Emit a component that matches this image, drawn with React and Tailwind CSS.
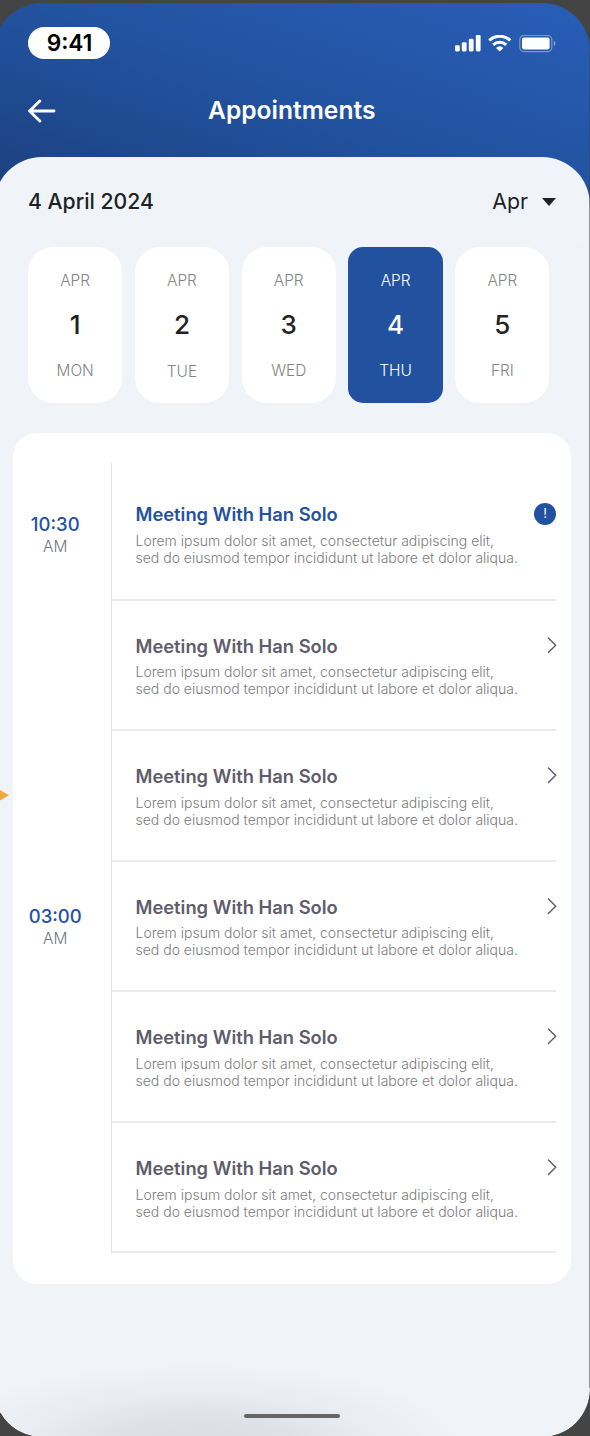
import React from "react";

const days = [
  { n: 1, d: "MON", nudge: "" },
  { n: 2, d: "TUE", nudge: "pt-px" },
  { n: 3, d: "WED", nudge: "" },
  { n: 4, d: "THU", nudge: "", active: true },
  { n: 5, d: "FRI", nudge: "" },
];

const meetings = [
  { box: "h-[138px] pt-[40px]", gap: "mt-[7px]", active: true },
  { box: "h-[130px] pt-[34px]", gap: "mt-[6px]" },
  { box: "h-[131px] pt-[34px]", gap: "mt-[7px]" },
  { box: "h-[130px] pt-[34px]", gap: "mt-[6px]" },
  { box: "h-[131px] pt-[34px]", gap: "mt-[7px]" },
  { box: "h-[130px] pt-[34px]", gap: "mt-[7px]" },
];

function StatusIcons() {
  return (
    <svg className="mt-[2px] mr-[1px]" width="102" height="18" viewBox="0 0 102 18" fill="none">
      <g fill="#fff">
        <rect x="0" y="10.2" width="4.8" height="6.2" rx="1.3" />
        <rect x="6.8" y="7.3" width="4.8" height="9.1" rx="1.3" />
        <rect x="13.8" y="3.8" width="4.8" height="12.6" rx="1.3" />
        <rect x="20.8" y="0" width="4.8" height="16.4" rx="1.3" />
      </g>
      <g stroke="#fff" strokeWidth="3">
        <path d="M34.2 5.4a15.2 15.2 0 0 1 21 0" />
        <path d="M38.2 9.9a9.5 9.5 0 0 1 13 0" />
      </g>
      <path d="M41 13a5.6 5.6 0 0 1 7.4 0L44.7 16.6z" fill="#fff" />
      <rect x="64.8" y="0.4" width="32" height="16.2" rx="4" stroke="#fff" strokeOpacity=".38" strokeWidth="1.2" />
      <rect x="67" y="2.6" width="27.6" height="11.8" rx="1.8" fill="#fff" />
      <path d="M98.8 5.7v5.6c1.9-.8 1.9-4.8 0-5.6z" fill="#fff" fillOpacity=".45" />
    </svg>
  );
}

function Time({ value }) {
  return (
    <div className="flex flex-col items-center whitespace-nowrap">
      <div className="-mt-px mb-px text-[18.5px] leading-[22px] font-medium text-[#2251a0]">{value}</div>
      <div className="text-[15.5px] leading-[22px] font-light text-[#747480]">AM</div>
    </div>
  );
}

function Meeting({ item }) {
  return (
    <div className={"flex justify-between border-b-2 border-[#ebebec] pl-[24px] whitespace-nowrap " + item.box}>
      <div>
        <div className={"text-[18.35px] leading-[22px] font-semibold " + (item.active ? "text-[#2251a0]" : "text-[#5e5c6b]")}>
          Meeting With Han Solo
        </div>
        <div className={"text-[14px] leading-[17px] font-light text-[#7c7c7c] " + item.gap}>
          Lorem ipsum dolor sit amet, consectetur adipiscing elit,
          <br />
          sed do eiusmod tempor incididunt ut labore et dolor aliqua.
        </div>
      </div>
      {item.active ? (
        <div className="flex size-[22px] items-center justify-center rounded-full bg-[#2251a0] text-[13px] font-normal text-white">!</div>
      ) : (
        <svg className="mt-[2px] -mr-px" width="10" height="17" viewBox="0 0 10 17" fill="none">
          <path d="M1.4 1L8.7 8.3L1.4 15.6" stroke="#5e5c6b" strokeWidth="1.4" strokeLinecap="round" strokeLinejoin="round" />
        </svg>
      )}
    </div>
  );
}

export default function App() {
  return (
    <div className="relative h-[1436px] w-[590px] overflow-hidden bg-[#444444] pt-[3px] font-['Inter',sans-serif]">
      <div className="-ml-[6px] h-[1434px] w-[595.5px] overflow-hidden rounded-[48px] bg-[linear-gradient(to_top_right,#1b3f7c_0px,#22529f_190px,#2b63c1_450px)] bg-[length:100%_200px] bg-no-repeat">
        <header className="h-[154px] pl-[34px]">
          <div className="flex h-[79px] items-center justify-between pr-[32px]">
            <div className="flex h-[32px] w-[82px] items-center justify-center rounded-full bg-white pt-px pl-px text-[22.7px] font-semibold text-black">9:41</div>
            <StatusIcons />
          </div>
          <div className="flex h-[58px] items-center">
            <svg width="28" height="24" viewBox="0 0 28 24" fill="none" stroke="#fff" strokeWidth="2.9" strokeLinecap="round" strokeLinejoin="round">
              <path d="M11.8 2L1.6 12L11.8 22M1.6 12H26" />
            </svg>
            <h1 className="mt-[-2px] ml-[152px] text-[24.6px] leading-[30px] font-semibold whitespace-nowrap text-white">Appointments</h1>
          </div>
        </header>

        <main className="h-[1280px] overflow-hidden rounded-[48px] bg-[#f0f4f9] bg-[radial-gradient(ellipse_270px_84px_at_206px_1290px,#dadee2_0%,#dee2e6_35%,#e9edf2_65%,#f0f4f9_100%)]">
          <div className="flex h-[90px] items-center justify-between pr-[33.5px] pb-px pl-[34px] whitespace-nowrap text-[#202124]">
            <span className="text-[21.2px] font-medium">4 April 2024</span>
            <span className="flex items-center gap-[14px] text-[21.3px]">
              Apr
              <svg className="mt-px" width="14" height="8" viewBox="0 0 14 8" fill="#202124"><path d="M0 0H14L7 8z" /></svg>
            </span>
          </div>

          <div className="flex gap-[12.5px] pl-[34px]">
            {days.map((day) => (
              <div
                key={day.n}
                className={
                  "flex h-[156px] w-[94.3px] shrink-0 flex-col items-center pt-[23px] " +
                  (day.active ? "rounded-[15px] bg-[#2251a0] text-white" : "rounded-[25px] bg-white text-[#858585]")
                }
              >
                <div className="text-[15.4px] leading-[22px] font-light">APR</div>
                <div className={"mt-[18px] text-[26px] leading-[30px] font-medium " + (day.active ? "text-white" : "text-[#222222]")}>{day.n}</div>
                <div className={"mt-[20px] text-[15.4px] leading-[22px] font-light " + day.nudge}>{day.d}</div>
              </div>
            ))}
            <div className="h-[156px] w-[94px] shrink-0 rounded-[15px] border border-[#f1f1f4]" />
          </div>

          <section className="mt-[30px] ml-[19px] flex h-[851px] w-[558px] rounded-[24px] bg-white pt-[30px] pr-[15px]">
            <div className="w-[97.5px] pr-[13px] pt-[51px]">
              <Time value="10:30" />
              <div className="h-[348px]" />
              <Time value="03:00" />
            </div>
            <div className="h-[790px] flex-1 border-l-[1.5px] border-[#e5e5e7]">
              {meetings.map((item, i) => (
                <Meeting key={i} item={item} />
              ))}
            </div>
          </section>

          <div className="mt-[130px] ml-[250px] h-[4px] w-[96px] rounded-full bg-[#656565]" />
        </main>
      </div>
      <div className="absolute top-[51px] right-0 h-[1337px] w-px bg-[#444444]/55" />
      <svg className="absolute top-[790px] left-0" width="10" height="11" viewBox="0 0 10 11" fill="#f1a844">
        <path d="M0 0L9 5.3L0 10.6z" />
      </svg>
    </div>
  );
}
